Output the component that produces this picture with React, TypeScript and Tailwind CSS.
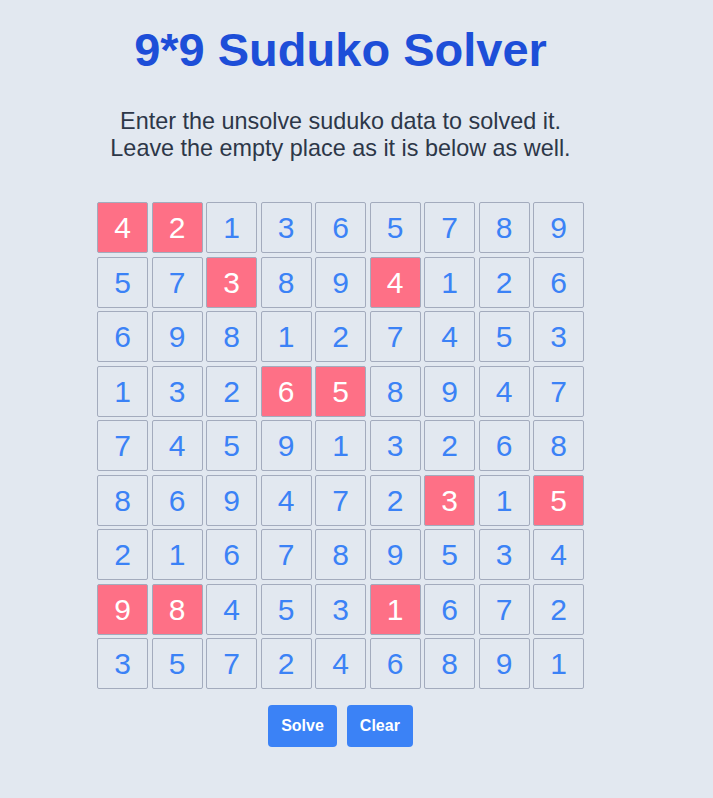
import React from 'react';

type Cell = { v: number; given?: boolean };

const rows: string[] = [
  '4r 2r 1 3 6 5 7 8 9',
  '5 7 3r 8 9 4r 1 2 6',
  '6 9 8 1 2 7 4 5 3',
  '1 3 2 6r 5r 8 9 4 7',
  '7 4 5 9 1 3 2 6 8',
  '8 6 9 4 7 2 3r 1 5r',
  '2 1 6 7 8 9 5 3 4',
  '9r 8r 4 5 3 1r 6 7 2',
  '3 5 7 2 4 6 8 9 1',
];

const board: Cell[][] = rows.map((r) =>
  r.split(' ').map((t) => ({ v: parseInt(t, 10), given: t.endsWith('r') }))
);

const App = () => {
  return (
    <div className="min-h-screen bg-[#e2e8f0] font-['Liberation_Sans',Arial,sans-serif]">
      <div className="w-[681px] flex flex-col items-center pt-[26px]">
        <h1 className="text-[47px] leading-none font-bold text-[#1d4ed8]">9*9 Suduko Solver</h1>

        <p className="mt-[35px] text-[23.4px] leading-[27px] text-[#2d3748] text-center">
          Enter the unsolve suduko data to solved it.
          <br />
          Leave the empty place as it is below as well.
        </p>

        <div className="mt-[40px] grid grid-cols-[repeat(9,51px)] gap-[3.5px]">
          {board.flat().map((c, i) => (
            <div
              key={i}
              className={`h-[51px] flex items-center justify-center rounded-[2px] border border-[#a3abbd] text-[30px] ${
                c.given ? 'bg-[#fe7086] text-white' : 'bg-[#e2e8f0] text-[#3b82f6]'
              }`}
            >
              {c.v}
            </div>
          ))}
        </div>

        <div className="mt-[16px] flex gap-[10px]">
          <button className="h-[42px] px-[13px] rounded-[4px] bg-[#3b82f6] text-white font-bold text-base">
            Solve
          </button>
          <button className="h-[42px] px-[13px] rounded-[4px] bg-[#3b82f6] text-white font-bold text-base">
            Clear
          </button>
        </div>
      </div>
    </div>
  );
};

export default App;
